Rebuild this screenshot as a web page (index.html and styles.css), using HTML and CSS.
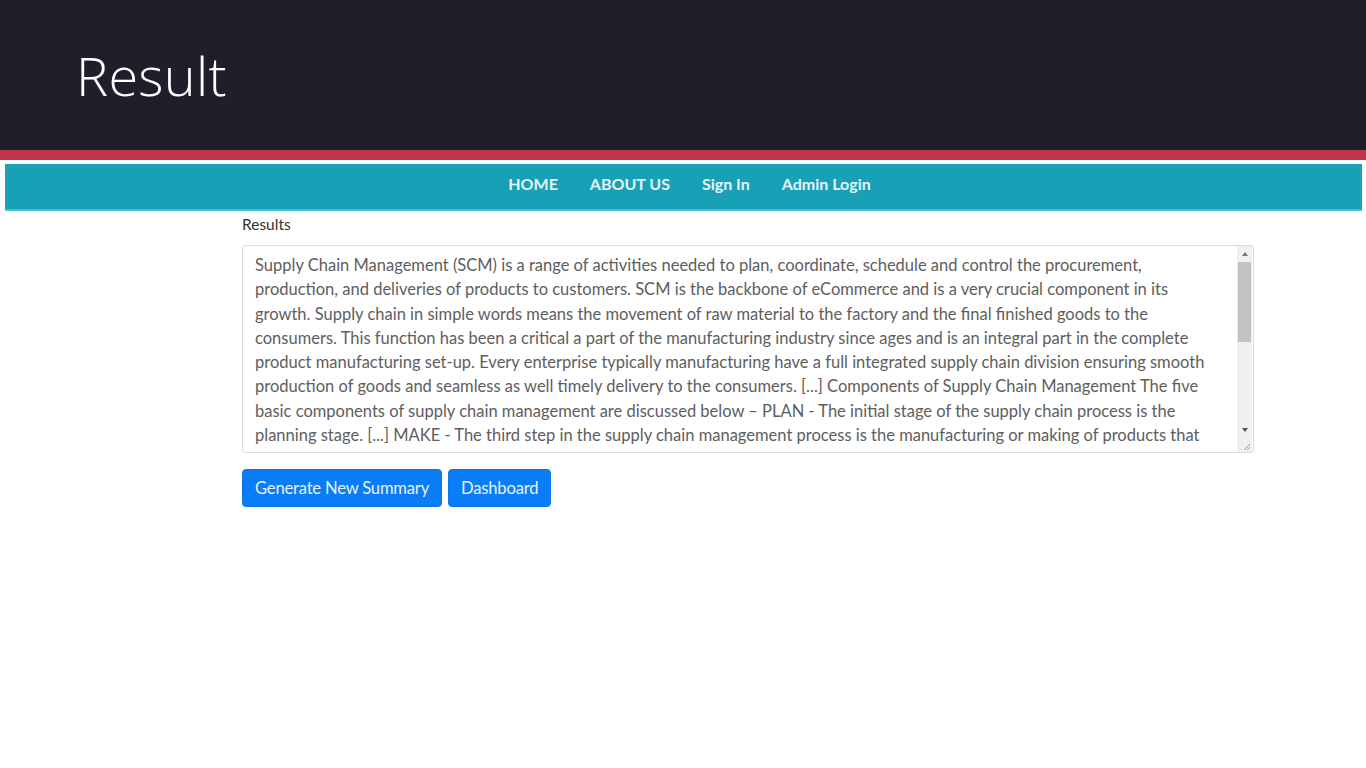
FILE: index.html
```html
<!DOCTYPE html>
<html lang="en">
<head>
<meta charset="utf-8">
<title>Result</title>
<link rel="stylesheet" href="styles.css">
</head>
<body>
<header class="slide-head">
  <h1 class="slide-title">Result</h1>
</header>
<div class="stripe"></div>
<nav class="navbar">
  <a class="nav-link" href="#">HOME</a>
  <a class="nav-link" href="#">ABOUT US</a>
  <a class="nav-link" href="#">Sign In</a>
  <a class="nav-link" href="#">Admin Login</a>
</nav>
<main class="content">
  <div class="field-label">Results</div>
  <div class="results-box" role="textbox" aria-readonly="true" aria-multiline="true">
    <div class="results-text">Supply Chain Management (SCM) is a range of activities needed to plan, coordinate, schedule and control the procurement,
production, and deliveries of products to customers. SCM is the backbone of eCommerce and is a very crucial component in its
growth. Supply chain in simple words means the movement of raw material to the factory and the final finished goods to the
consumers. This function has been a critical a part of the manufacturing industry since ages and is an integral part in the complete
product manufacturing set-up. Every enterprise typically manufacturing have a full integrated supply chain division ensuring smooth
production of goods and seamless as well timely delivery to the consumers. [...] Components of Supply Chain Management The five
basic components of supply chain management are discussed below – PLAN - The initial stage of the supply chain process is the
planning stage. [...] MAKE - The third step in the supply chain management process is the manufacturing or making of products that</div>
    <div class="scrollbar" aria-hidden="true">
      <div class="sb-btn sb-up"></div>
      <div class="sb-track"><div class="sb-thumb"></div></div>
      <div class="sb-btn sb-down"></div>
      <div class="sb-corner">
        <svg width="15" height="15" viewBox="0 0 15 15"><path d="M13 7 L7 13 M13 10 L10 13" stroke="#9a9a9a" stroke-width="1" fill="none"/></svg>
      </div>
    </div>
  </div>
  <div class="actions">
    <button class="btn" type="button">Generate New Summary</button>
    <button class="btn" type="button">Dashboard</button>
  </div>
</main>
</body>
</html>
```
FILE: styles.css
```css
html, body {
  margin: 0;
  padding: 0;
  background: #ffffff;
}

.slide-head {
  height: 150px;
  background: #1e1f2b;
  display: flex;
  align-items: center;
  padding-left: 76px;
  box-sizing: border-box;
}

.slide-title {
  margin: 0;
  color: #ffffff;
  font-family: "Open Sans", "Liberation Sans", sans-serif;
  font-weight: 300;
  font-size: 54px;
  line-height: 1;
  letter-spacing: 0.3px;
}

.stripe {
  height: 10px;
  background: #c0344c;
  margin-bottom: 4px;
}

.navbar {
  margin: 0 4px 0 5px;
  height: 47px;
  background: #18a0b6;
  border-bottom: 2px solid #4cc0cf;
  box-sizing: border-box;
  display: flex;
  justify-content: center;
  align-items: center;
  gap: 32px;
  padding-left: 12px;
  padding-bottom: 6px;
}

.nav-link {
  color: #e3f5f8;
  text-decoration: none;
  font-family: "Lato", "Open Sans", sans-serif;
  font-weight: 700;
  font-size: 16px;
  letter-spacing: 0;
}

.content {
  margin-left: 242px;
  width: 1012px;
  display: flex;
  flex-direction: column;
  align-items: flex-start;
  padding-top: 3px;
}

.field-label {
  font-family: "Lato", "Open Sans", sans-serif;
  font-size: 15.5px;
  color: #333333;
  line-height: 20px;
  margin-bottom: 11px;
}

.results-box {
  width: 1012px;
  height: 208px;
  box-sizing: border-box;
  border: 1px solid #dcdcdc;
  border-radius: 3px;
  display: flex;
  background: #fff;
}

.results-text {
  flex: 1;
  padding: 7px 12px 0 12px;
  font-family: "Lato", "Open Sans", sans-serif;
  font-size: 16.5px;
  line-height: 24.3px;
  color: #5e5e5e;
  white-space: pre;
}

.scrollbar {
  width: 15px;
  margin-right: 1px;
  display: flex;
  flex-direction: column;
  background: #f0f0f0;
}

.sb-btn {
  height: 15px;
  display: flex;
  align-items: center;
  justify-content: center;
}

.sb-up::before,
.sb-down::before {
  content: "";
  width: 0;
  height: 0;
  border-left: 3.5px solid transparent;
  border-right: 3.5px solid transparent;
}

.sb-up::before {
  border-bottom: 4px solid #777;
}

.sb-down::before {
  border-top: 4px solid #555;
}

.sb-track {
  flex: 1;
  padding: 1px 1px 0 1px;
}

.sb-thumb {
  height: 80px;
  background: #c3c3c3;
}

.sb-corner {
  height: 15px;
  background: #f0f0f0;
}

.sb-corner svg {
  display: block;
}

.actions {
  display: flex;
  gap: 6px;
  margin-top: 16px;
}

.btn {
  height: 38px;
  padding: 0 12px;
  display: inline-flex;
  align-items: center;
  white-space: nowrap;
  background: #0a7cf5;
  color: #e8f1fe;
  border: 1px solid #0a74e8;
  border-radius: 4px;
  font-family: "Lato", "Open Sans", sans-serif;
  font-size: 16.6px;
  line-height: 20px;
  letter-spacing: -0.2px;
}
```
